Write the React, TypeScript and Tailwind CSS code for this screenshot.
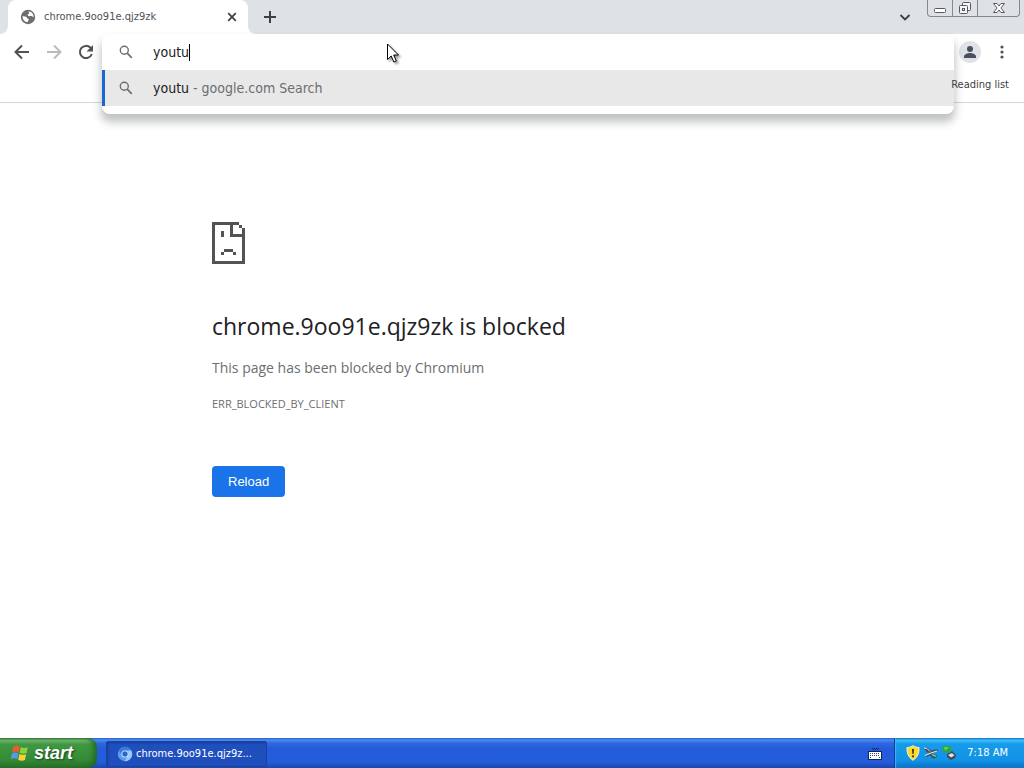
import type { ReactNode } from "react";

function SearchIcon() {
  return (
    <svg className="size-4 shrink-0" viewBox="0 0 16 16" fill="none" stroke="#6b6e72" strokeWidth="1.4" aria-hidden="true">
      <circle cx="6.3" cy="6.3" r="4" />
      <path d="M9.2 9.2L13.800 13.800" strokeWidth="1.7" />
    </svg>
  );
}

function GlobeIcon() {
  return (
    <svg className="size-4 shrink-0" viewBox="0 0 16 16" aria-hidden="true">
      <circle cx="8" cy="8" r="7.2" fill="#6b6e72" />
      <path d="M2.600 7.300c1.500.2 3.400 0 4.200.9.600.7.300 1.400 1.200 1.500.9.1 1.200.9.600 1.600-.5.500-.9.700-.8 2C4.500 13 2.300 10.500 2.600 7.300z" fill="#fff" />
      <path d="M8.200 2.600c1.600-.3 3.400.6 4.500 2.200.7 1.100 1 2.200.9 3.400-1-.1-1.300-.9-2.300-1.100-1.200-.2-2.200.4-3.200-.3-.9-.7-.3-1.700.6-1.900.9-.3.4-1.300-.5-2.300z" fill="#fff" />
    </svg>
  );
}

function ToolButton({ label, children, disabled }: { label: string; children: ReactNode; disabled?: boolean }) {
  return (
    <button type="button" aria-label={label} disabled={disabled} className="flex size-8 items-center justify-center">
      {children}
    </button>
  );
}

function TabStrip() {
  return (
    <header className="flex h-[34px] items-start bg-[#dee1e6] pl-2 pr-1">
      <div className="relative flex h-[34px] w-60 items-center rounded-t-lg bg-white pl-3 pr-2">
        <svg className="absolute -left-2 bottom-0 size-2" viewBox="0 0 8 8" aria-hidden="true">
          <path d="M8 0v8H0a8 8 0 0 0 8-8z" fill="#fff" />
        </svg>
        <svg className="absolute -right-2 bottom-0 size-2" viewBox="0 0 8 8" aria-hidden="true">
          <path d="M0 0v8h8a8 8 0 0 1-8-8z" fill="#fff" />
        </svg>
        <GlobeIcon />
        <span className="ml-2 flex-1 truncate text-[11px] text-[#505357]">chrome.9oo91e.qjz9zk</span>
        <button type="button" aria-label="Close tab" className="flex size-4 items-center justify-center">
          <svg className="size-4" viewBox="0 0 16 16" stroke="#3c4043" strokeWidth="1.7" aria-hidden="true">
            <path d="M4.200 4.200l7.600 7.600M11.800 4.200l-7.600 7.600" />
          </svg>
        </button>
      </div>
      <button type="button" aria-label="New tab" className="ml-2 flex h-[34px] w-7 items-center justify-center">
        <svg className="size-4" viewBox="0 0 16 16" stroke="#3c4043" strokeWidth="2" aria-hidden="true">
          <path d="M8 2v12M2 8h12" />
        </svg>
      </button>
      <button type="button" aria-label="Search tabs" className="ml-auto mr-2 flex h-[34px] w-7 items-center justify-center">
        <svg className="size-4" viewBox="0 0 16 16" fill="none" stroke="#3c4043" strokeWidth="1.8" aria-hidden="true">
          <path d="M3.500 6L8 10.500 12.500 6" />
        </svg>
      </button>
      <div className="flex h-[17px] w-[93px] overflow-hidden rounded-b-[4px] border border-t-0 border-[#85888d] text-[#55585e]">
        <button type="button" aria-label="Minimize" className="flex w-[25px] items-center justify-center border-r border-[#85888d]">
          <svg className="h-4 w-4" viewBox="0 0 16 16" fill="#fff" stroke="currentColor" aria-hidden="true">
            <rect x="2.500" y="8.500" width="11" height="4" rx="1" />
          </svg>
        </button>
        <button type="button" aria-label="Restore" className="flex w-[25px] items-center justify-center border-r border-[#85888d]">
          <svg className="h-4 w-4" viewBox="0 0 16 16" fill="#f4f5f7" stroke="currentColor" aria-hidden="true">
            <rect x="5.500" y="2.500" width="8" height="8" rx="1" />
            <rect x="2.500" y="5.500" width="8" height="8" rx="1" />
            <rect x="5.500" y="8.500" width="2" height="2" />
          </svg>
        </button>
        <button type="button" aria-label="Close" className="flex flex-1 items-center justify-center">
          <svg className="h-4 w-4" viewBox="0 0 16 16" fill="#fff" stroke="currentColor" aria-hidden="true">
            <path d="M2.500 3.500h3.500L8 6l2-2.500h3.500L10 8l3.500 4.500H10L8 10l-2 2.500H2.500L6 8z" />
          </svg>
        </button>
      </div>
    </header>
  );
}

function Omnibox() {
  return (
    <div className="relative z-10 flex-1">
      <div className="absolute inset-x-0 top-0 overflow-hidden rounded-lg bg-white pb-2 shadow-[0_7px_8px_1px_rgba(60,64,67,0.32)]">
        <div className="flex h-9 items-center pl-4">
          <SearchIcon />
          <div className="ml-[19px] flex flex-1 items-center">
            <input
              aria-label="Address and search bar"
              type="text"
              defaultValue="youtu"
              className="field-sizing-content bg-transparent text-sm text-[#202124] outline-none"
            />
            <span className="h-[17px] w-px bg-black" />
          </div>
        </div>
        <a href="#search" className="flex h-9 items-center border-l-[3px] border-[#1a66d2] bg-[#e8e8e8] pl-[13px] text-sm text-[#202124]">
          <SearchIcon />
          <span className="ml-[19px] whitespace-pre">youtu<span className="text-[#6b6e72]"> - google.com Search</span></span>
        </a>
      </div>
    </div>
  );
}

function Toolbar() {
  return (
    <nav className="border-b border-[#d5d7da] bg-white">
      <div className="flex h-9 items-center">
        <div className="flex w-[102px] pl-1.5 pr-0">
          <ToolButton label="Back">
            <svg className="size-4" viewBox="0 0 16 16" fill="none" stroke="#4f5256" strokeWidth="2" aria-hidden="true">
              <path d="M15 8H2M8 1.500L1.500 8 8 14.500" />
            </svg>
          </ToolButton>
          <ToolButton label="Forward" disabled>
            <svg className="size-4" viewBox="0 0 16 16" fill="none" stroke="#babcbe" strokeWidth="2" aria-hidden="true">
              <path d="M1 8h13M8 1.500L14.500 8 8 14.500" />
            </svg>
          </ToolButton>
          <ToolButton label="Reload page">
            <svg className="size-4" viewBox="0 0 16 16" fill="none" stroke="#4f5256" strokeWidth="2" aria-hidden="true">
              <path d="M13.800 10A6.100 6.100 0 1 1 12.500 3.800L14 5.300" />
              <path d="M15 1v6.500H8.500z" fill="#4f5256" stroke="none" />
            </svg>
          </ToolButton>
        </div>
        <div className="flex flex-1 self-start">
          <Omnibox />
        </div>
        <button type="button" aria-label="Profile" className="ml-[5px] flex size-[22px] items-center justify-center rounded-full bg-[#dfe3e8]">
          <svg className="size-4" viewBox="0 0 16 16" fill="#47505b" aria-hidden="true">
            <circle cx="8" cy="5" r="3" />
            <path d="M2 14v-1.500C2 10.200 5.500 9 8 9s6 1.200 6 3.500V14z" />
          </svg>
        </button>
        <div className="ml-[5px] mr-1.5">
          <ToolButton label="Menu">
            <svg className="size-4" viewBox="0 0 16 16" fill="#4f5256" aria-hidden="true">
              <circle cx="8" cy="3" r="1.600" />
              <circle cx="8" cy="8" r="1.600" />
              <circle cx="8" cy="13" r="1.600" />
            </svg>
          </ToolButton>
        </div>
      </div>
      <div className="flex h-8 items-start justify-end pr-[15px] pt-[7px]">
        <button type="button" className="relative z-20 text-[11px] leading-4 text-[#3c4043]">Reading list</button>
      </div>
    </nav>
  );
}

function SadPageIcon() {
  return (
    <svg className="h-[42px] w-[33px]" viewBox="0 0 33 42" fill="#535353" shapeRendering="crispEdges" aria-hidden="true">
      <path d="M0 0h27v3h-6v9h9v-3h3v33H0zM3 3v36h27V15H18V3z" fillRule="evenodd" />
      <path d="M27 3h3v3h-3zM30 6h3v3h-3zM9 9h3v6H9zM12 27h9v3h-9zM9 30h3v3H9zM21 30h3v3h-3z" />
    </svg>
  );
}

function ErrorPage() {
  return (
    <main className="flex-1 bg-white pl-[212px] pt-[119px] font-['Open_Sans',sans-serif] text-[#6b6e72]">
      <SadPageIcon />
      <h1 className="mt-[46px] text-[23px] leading-8 text-[#202124]">chrome.9oo91e.qjz9zk is blocked</h1>
      <p className="mt-[14px] text-sm leading-6">This page has been blocked by Chromium</p>
      <p className="mt-[14px] text-[11px] leading-5">ERR_BLOCKED_BY_CLIENT</p>
      <button type="button" className="mt-[52px] h-[31px] rounded-[4px] bg-[#1a73e8] px-4 font-['Liberation_Sans',sans-serif] text-[13px] text-white">
        Reload
      </button>
    </main>
  );
}

function WindowsFlag() {
  return (
    <svg className="h-[18px] w-5" viewBox="0 0 20 18" aria-hidden="true">
      <path d="M3.500 2.500Q6.500.500 9.800 2.500L8.600 8.300Q5.500 6.700 2.200 8.200z" fill="#ee5a2b" />
      <path d="M10.800 3Q14 5 17.800 3.200L16.500 9Q13 10.500 9.600 8.900z" fill="#8fd13f" />
      <path d="M2 9.300Q5.300 7.800 8.400 9.400L7.200 15.200Q4 13.500.700 15z" fill="#5b95ee" />
      <path d="M9.400 10Q12.800 11.600 16.200 10.200L14.900 16Q11.500 17.500 8.200 15.800z" fill="#fcd13b" />
    </svg>
  );
}

function Taskbar() {
  return (
    <footer className="flex h-[30px] bg-[linear-gradient(180deg,#2a61cc_0,#4c8cf2_7%,#2f6ae0_16%,#235bdb_35%,#245ddb_80%,#1b46ad_100%)] text-[11px] text-white">
      <button
        type="button"
        className="flex w-[97px] items-center rounded-r-[9px] bg-[linear-gradient(180deg,#388238_0,#6fb56f_8%,#3f9741_22%,#358c37_70%,#276f29_100%)] pl-2.5 font-['Liberation_Sans',sans-serif] text-lg font-bold italic leading-6 shadow-[inset_-5px_0_6px_-2px_#1f6424] [text-shadow:1px_1px_2px_#1b401c]"
      >
        <WindowsFlag />
        <span className="ml-1">start</span>
      </button>
      <button
        type="button"
        className="ml-[9px] mt-[3px] flex h-[26px] w-[161px] items-center rounded-[2px] border border-[#1a42a0] bg-[#1f4fbd] pl-2.5 shadow-[inset_1px_1px_2px_#163c94]"
      >
        <svg className="size-4 shrink-0" viewBox="0 0 16 16" aria-hidden="true">
          <circle cx="8" cy="8" r="7.200" fill="#5b9df0" />
          <path d="M8 .800a7.200 7.200 0 0 1 6.300 3.800H8A3.500 3.500 0 0 0 4.900 9.500L1.800 4.300A7.200 7.200 0 0 1 8 .800z" fill="#3a79d8" />
          <path d="M14.300 4.600A7.200 7.200 0 0 1 7.700 15.200L11 9.700A3.500 3.500 0 0 0 10 4.600z" fill="#9cc8fa" />
          <circle cx="8" cy="8" r="3.600" fill="#e4effd" />
          <circle cx="8" cy="8" r="2.700" fill="#2c66c8" />
        </svg>
        <span className="ml-[3px] whitespace-nowrap">chrome.9oo91e.qjz9z...</span>
      </button>
      <div className="ml-auto mr-3 flex items-center">
        <svg className="h-[13px] w-[14px]" viewBox="0 0 14 13" aria-hidden="true" shapeRendering="crispEdges">
          <path d="M4 1h1v1H4zM6 1h1v1H6zM8 1h1v1H8zM10 1h1v1h-1zM5 2h1v1H5zM7 2h1v1H7zM9 2h1v1H9z" fill="#10235c" />
          <rect x="0" y="4" width="14" height="9" fill="#11245c" />
          <path d="M1 5h12v7H1z" fill="#fff" />
          <path d="M2 6.500h10M2 8.500h10" fill="none" stroke="#33406b" strokeDasharray="1 1" />
          <path d="M2 10h1v1H2zM11 10h1v1h-1z" fill="#33406b" />
        </svg>
      </div>
      <div className="flex items-center border-l border-[#0b3f99] bg-[linear-gradient(180deg,#0f72c9_0,#3dbdf8_8%,#179be9_20%,#1292e6_75%,#0d6fc2_100%)] pl-2.5 pr-4 shadow-[inset_1px_0_1px_#38b9f5]">
        <svg className="size-4" viewBox="0 0 16 16" aria-hidden="true">
          <path d="M8 .700C10 2 12 2.500 14 2.500c.3 5-1 9.500-6 12.800C3 12 1.700 7.500 2 2.500 4 2.500 6 2 8 .700z" fill="#ffda29" stroke="#f8f4cf" />
          <path d="M7 4h2l-.4 5H7.400z" fill="#33301c" />
          <circle cx="8" cy="11.300" r="1.100" fill="#33301c" />
        </svg>
        <svg className="ml-0.5 size-4" viewBox="0 0 16 16" aria-hidden="true">
          <path d="M1 3.500l3-1 4 3 6-1.500 1 2-6 2.200-5-.700z" fill="#42516b" />
          <path d="M1 3l3 .500 3 3" stroke="#d5e3dc" fill="none" />
          <path d="M3 10l6-2 5 2.500-1 2.500-3 .500-3-3-4 1.500z" fill="#3d4e5f" />
          <path d="M2 10.500l6-2.500 6-2" stroke="#d8e5d0" fill="none" strokeWidth="1.300" />
          <path d="M9 9.500l4 2" stroke="#7bc47e" fill="none" strokeWidth="1.500" />
        </svg>
        <svg className="ml-0.5 size-4" viewBox="0 0 16 16" aria-hidden="true">
          <path d="M6 9l5-3 4 4-1 3-4 2-4-3z" fill="#3c4854" />
          <path d="M7 10l4-2 2.500 2.500-3.500 2z" fill="#dce3df" />
          <path d="M2 1l8 0-1 2 2 2-2 3-3-2-2 2-3-3z" fill="#2ba73c" />
          <path d="M3 2l5 .500-4 3z" fill="#6bd36b" />
        </svg>
        <time className="ml-2.5">7:18 AM</time>
      </div>
    </footer>
  );
}

function Pointer() {
  return (
    <svg className="pointer-events-none absolute left-[387px] top-[43px] z-30 h-[20px] w-[13px] drop-shadow-[2px_2px_1px_rgba(0,0,0,0.4)]" viewBox="0 0 13 20" aria-hidden="true">
      <path d="M.500 1v15.500l3.700-3.500 2.600 6 2.500-1.100L6.700 12H11.500z" fill="#fff" stroke="#000" />
    </svg>
  );
}

export default function App() {
  return (
    <div className="relative flex min-h-screen flex-col bg-white font-['DejaVu_Sans_Condensed','DejaVu_Sans',sans-serif]">
      <TabStrip />
      <Toolbar />
      <ErrorPage />
      <Taskbar />
      <Pointer />
    </div>
  );
}
